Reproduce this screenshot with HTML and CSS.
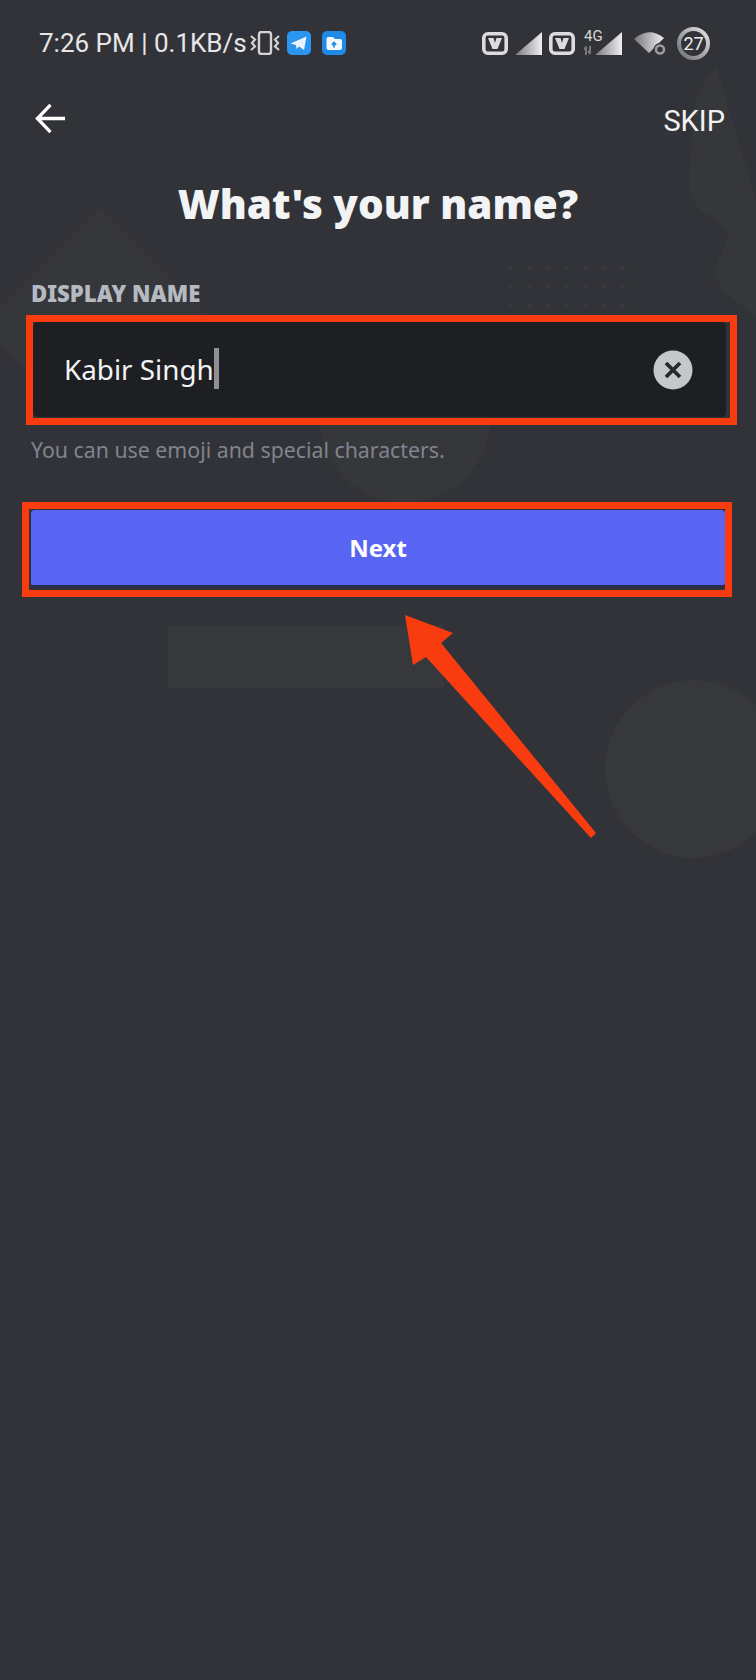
FILE: index.html
```html
<!DOCTYPE html>
<html lang="en">
<head>
<meta charset="utf-8">
<title>What's your name?</title>
<link rel="stylesheet" href="styles.css">
</head>
<body>
<div class="screen">
  <svg class="backdrop" viewBox="0 0 756 1680" aria-hidden="true">
    <path class="shape-faint" d="M100 208 L232 340 L232 425 L80 425 L0 345 L0 308 Z"/>
    <circle class="shape-faint" cx="405" cy="418" r="85"/>
    <rect class="shape" x="168" y="625" width="276" height="63"/>
    <circle class="shape" cx="694" cy="769" r="89"/>
    <path class="shape-faint" d="M716 66 C708 78 700 90 695 100 L690 165 C688 180 688 195 700 210 C712 218 726 222 728 235 C726 250 716 258 716 272 C716 290 735 300 756 316 L756 200 L741 150 Z"/>
    <g class="dots">
      <circle cx="511" cy="268" r="2.5"/><circle cx="530" cy="268" r="2.5"/><circle cx="548" cy="268" r="2.5"/><circle cx="567" cy="268" r="2.5"/><circle cx="585" cy="268" r="2.5"/><circle cx="604" cy="268" r="2.5"/><circle cx="622" cy="268" r="2.5"/>
      <circle cx="511" cy="287" r="2.5"/><circle cx="530" cy="287" r="2.5"/><circle cx="548" cy="287" r="2.5"/><circle cx="567" cy="287" r="2.5"/><circle cx="585" cy="287" r="2.5"/><circle cx="604" cy="287" r="2.5"/><circle cx="622" cy="287" r="2.5"/>
      <circle cx="511" cy="306" r="2.5"/><circle cx="530" cy="306" r="2.5"/><circle cx="548" cy="306" r="2.5"/><circle cx="567" cy="306" r="2.5"/><circle cx="585" cy="306" r="2.5"/><circle cx="604" cy="306" r="2.5"/><circle cx="622" cy="306" r="2.5"/>
    </g>
  </svg>

  <div class="statusbar">
    <div class="status-left">
      <span class="status-text">7:26 PM | 0.1KB/s</span>
      <svg class="ic-vibrate" viewBox="0 0 32 24" aria-hidden="true">
        <rect x="10" y="1" width="12" height="22" rx="2.5" fill="none" stroke="#d4d4d6" stroke-width="2.4"/>
        <path d="M2 5l4 3.500-3 3.500 3 3.500-4 3.500M30 5l-4 3.500 3 3.500-3 3.500 4 3.500" fill="none" stroke="#d4d4d6" stroke-width="2.200"/>
      </svg>
      <svg class="ic-app" viewBox="0 0 24 24" aria-hidden="true">
        <rect width="24" height="24" rx="5" fill="#2b95ef"/>
        <path d="M3.500 12.500 L19.500 5.500 L17 19 L12 15.500 L9.500 18 L9 14 Z" fill="#e9f4fe"/>
      </svg>
      <svg class="ic-app ic-folder" viewBox="0 0 24 24" aria-hidden="true">
        <rect width="24" height="24" rx="5" fill="#1f8ae8"/>
        <path d="M4.500 8 Q4.500 6 6.500 6 H11 L13 8 H18 Q20 8 20 10 V17 Q20 19 18 19 H6.500 Q4.500 19 4.500 17 Z" fill="#f2f8fe"/>
        <path d="M12 16.500 V12 M9.800 13.800 L12 11.500 L14.200 13.800" fill="none" stroke="#1f8ae8" stroke-width="1.700"/>
      </svg>
    </div>
    <div class="status-right">
      <svg class="ic-volte" viewBox="0 0 26 23" aria-hidden="true">
        <rect x="1.800" y="1.800" width="22.400" height="19.400" rx="4" fill="none" stroke="#dcdcde" stroke-width="3.600"/>
        <path d="M6 6 H11.500 L13 11 L14.500 6 H20 L15.500 17 H10.500 Z" fill="#dcdcde"/>
      </svg>
      <svg class="ic-signal" viewBox="0 0 27 23" aria-hidden="true">
        <defs>
          <linearGradient id="sig" x1="0" x2="1" y1="0" y2="0">
            <stop offset="0" stop-color="#77787b"/><stop offset="1" stop-color="#f0f0f2"/>
          </linearGradient>
          <linearGradient id="ring" x1="1" x2="0" y1="0" y2="1">
            <stop offset="0" stop-color="#e2e2e4"/><stop offset="1" stop-color="#707174"/>
          </linearGradient>
        </defs>
        <path d="M0 23 L27 0 V23 Z" fill="url(#sig)"/>
      </svg>
      <svg class="ic-volte" viewBox="0 0 26 23" aria-hidden="true">
        <rect x="1.800" y="1.800" width="22.400" height="19.400" rx="4" fill="none" stroke="#dcdcde" stroke-width="3.600"/>
        <path d="M6 6 H11.500 L13 11 L14.500 6 H20 L15.500 17 H10.500 Z" fill="#dcdcde"/>
      </svg>
      <div class="net">
        <span class="net-label">4G</span>
        <svg class="ic-signal ic-signal-net" viewBox="0 0 39 23" aria-hidden="true">
          <path d="M2 23 V15 M0 17.500 L2.500 14.500 M6 14 V21 M4 19 L6.500 22" fill="none" stroke="#77787b" stroke-width="2"/>
          <path d="M11 23 L38 0 V23 Z" fill="url(#sig)"/>
        </svg>
      </div>
      <svg class="ic-wifi" viewBox="0 0 32 24" aria-hidden="true">
        <path d="M0 8 Q15 -5 30 7 L15 22 Z" fill="url(#sig)"/>
        <circle cx="26" cy="18.500" r="6.500" fill="#323338"/>
        <circle cx="26" cy="18.500" r="4" fill="none" stroke="#9a9b9e" stroke-width="2.600"/>
      </svg>
      <div class="battery">
        <svg class="battery-ring" viewBox="0 0 33 33" aria-hidden="true">
          <circle cx="16.500" cy="16.500" r="14.500" fill="none" stroke="url(#ring)" stroke-width="4"/>
        </svg>
        <span class="battery-num">27</span>
      </div>
    </div>
  </div>

  <div class="toolbar">
    <svg class="ic-back" viewBox="0 0 32 32" aria-hidden="true">
      <path d="M31 16 H3 M16 2 L2.500 16 L16 30" fill="none" stroke="#fff" stroke-width="3.400"/>
    </svg>
    <span class="skip">SKIP</span>
  </div>

  <h1 class="title">What's your name?</h1>

  <div class="label">DISPLAY NAME</div>

  <div class="field-frame">
    <div class="field">
      <span class="field-text">Kabir Singh</span><span class="caret"></span>
      <svg class="ic-clear" viewBox="0 0 40 40" aria-hidden="true">
        <circle cx="20" cy="20" r="19.500" fill="#c4c7cc"/>
        <path d="M13 13 L27 27 M27 13 L13 27" stroke="#26282c" stroke-width="3.800" fill="none"/>
      </svg>
    </div>
  </div>

  <div class="hint">You can use emoji and special characters.</div>

  <div class="button-frame">
    <div class="button">Next</div>
  </div>

  <svg class="arrow" viewBox="0 0 756 1680" aria-hidden="true">
    <path d="M405 615 L453 633 L441 643 L596 833 L591 838 L426 657 L413 665 Z" fill="#f93b10"/>
  </svg>
</div>
</body>
</html>
```

FILE: styles.css
```css
* { box-sizing: border-box; }
html, body { margin: 0; padding: 0; }
body { background: #323338; }

.screen {
  position: relative;
  width: 756px;
  height: 1680px;
  overflow: hidden;
  background: #323338;
  font-family: "Noto Sans", "Liberation Sans", sans-serif;
  color: #fff;
}
.backdrop, .arrow {
  position: absolute;
  left: 0;
  top: 0;
  width: 756px;
  height: 1680px;
}
.shape { fill: #37383c; }
.shape-faint { fill: #36373b; }
.dots { fill: #37383d; }

.statusbar, .toolbar, .title, .label, .field-frame, .hint, .button-frame {
  position: relative;
}

.statusbar {
  display: flex;
  justify-content: space-between;
  align-items: center;
  height: 84px;
  padding: 2px 46px 0 39px;
}
.status-left, .status-right { display: flex; align-items: center; }
.status-text {
  font-family: Roboto, sans-serif;
  font-size: 26px;
  color: #e6e6e8;
  white-space: nowrap;
}
.ic-vibrate { width: 32px; height: 24px; margin-left: 2px; }
.ic-app { width: 24px; height: 24px; margin-left: 6px; }
.ic-folder { margin-left: 11px; }

.ic-volte { width: 26px; height: 23px; }
.ic-signal { width: 27px; height: 23px; margin: 0 7px; }
.net { position: relative; width: 38px; height: 23px; margin-left: 9px; }
.net-label {
  position: absolute;
  left: 0;
  top: -3px;
  font-family: Roboto, sans-serif;
  font-size: 15px;
  line-height: 15px;
  color: #d6d6d8;
}
.ic-signal-net { position: absolute; left: 0; top: 0; width: 39px; margin: 0; }
.ic-wifi { width: 32px; height: 24px; margin-left: 12px; }
.battery {
  position: relative;
  display: flex;
  align-items: center;
  justify-content: center;
  width: 33px;
  height: 33px;
  margin-left: 11px;
}
.battery-ring { position: absolute; left: 0; top: 0; width: 33px; height: 33px; }
.battery-num { font-family: Roboto, sans-serif; font-size: 18px; color: #f0f0f0; }

.toolbar {
  display: flex;
  justify-content: space-between;
  align-items: center;
  height: 68px;
  padding: 0 31px 0 35px;
}
.ic-back { width: 31px; height: 31px; }
.skip { margin-top: 6px; font-family: Roboto, sans-serif; font-size: 29px; color: #f2f2f3; }

.title {
  margin: 22px 0 0;
  height: 60px;
  font-size: 40.4px;
  line-height: 60px;
  font-weight: 900;
  text-align: center;
  color: #f2f3f5;
}
.label {
  margin: 46px 0 0 31px;
  font-size: 22.2px;
  line-height: 28px;
  font-weight: 900;
  color: #b5bac1;
}
.field-frame {
  width: 711px;
  height: 110px;
  margin: 7px 0 0 26px;
  padding: 0 4px 1px 0;
  border: 7px solid #f93b10;
}
.field {
  display: flex;
  align-items: center;
  height: 95px;
  padding: 0 33px 0 31px;
  border-radius: 5px;
  background: #1e1f22;
}
.field-text { margin-top: -2px; font-size: 27.8px; color: #f2f3f5; }
.caret { width: 5px; height: 41px; margin-top: -2px; background: #8e9096; }
.ic-clear { width: 40px; height: 40px; margin-left: auto; }

.hint {
  margin: 10px 0 0 31px;
  font-size: 21.3px;
  line-height: 30px;
  color: #80848e;
}
.button-frame {
  width: 710px;
  height: 95px;
  margin: 37px 0 0 22px;
  padding: 1px 0 0 2px;
  border: 7px solid #f93b10;
}
.button {
  display: flex;
  align-items: center;
  justify-content: center;
  width: 694px;
  height: 78px;
  border-radius: 4px;
  border-bottom: 3px solid #2b2d4f;
  background: #5865f2;
  font-size: 24px;
  font-weight: 700;
  color: #fff;
}
```
